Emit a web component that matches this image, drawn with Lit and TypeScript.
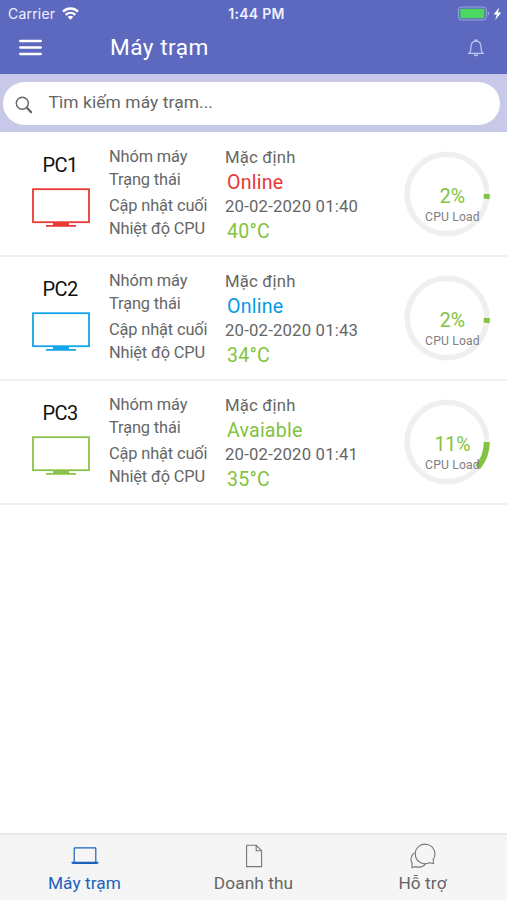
import { LitElement, html, css, svg } from "lit";
import { customElement, property } from "lit/decorators.js";

interface Station {
  name: string;
  color: string;
  status: string;
  statusColor: string;
  updated: string;
  temp: string;
  load: number;
}

const GREEN = "#82c341";

const STATIONS: Station[] = [
  { name: "PC1", color: "#e93a36", status: "Online", statusColor: "#e53935", updated: "20-02-2020 01:40", temp: "40°C", load: 2 },
  { name: "PC2", color: "#14a4ea", status: "Online", statusColor: "#039be5", updated: "20-02-2020 01:43", temp: "34°C", load: 2 },
  { name: "PC3", color: "#8bc34a", status: "Avaiable", statusColor: GREEN, updated: "20-02-2020 01:41", temp: "35°C", load: 11 },
];

@customElement("load-ring")
class LoadRing extends LitElement {
  @property({ type: Number }) value = 0;

  static styles = css`
    :host { display: grid; width: 86px; height: 86px; }
    svg, .caption { grid-area: 1 / 1; }
    svg { display: block; }
    .track { fill: none; stroke: #efefef; stroke-width: 5.6; }
    .bar { fill: none; stroke: #82c341; stroke-width: 6; }
    .caption { padding: 33px 0 0 12px; text-align: center; white-space: nowrap; }
    .percent { color: #82c341; font-size: 19.5px; line-height: 25px; letter-spacing: 0; }
    .label { color: #808080; font-size: 12.2px; line-height: 17px; letter-spacing: 0.15px; }
  `;

  render() {
    const r = 39.8;
    const length = 2 * Math.PI * r;
    const part = (length * this.value) / 100;
    return html`
      <svg width="86" height="86" viewBox="0 0 86 86">
        <circle class="track" cx="43" cy="43" r=${r} />
        ${svg`<circle class="bar" cx="43" cy="43" r=${r} stroke-dasharray="${part} ${length - part}" />`}
      </svg>
      <div class="caption">
        <div class="percent">${this.value}%</div>
        <div class="label">CPU Load</div>
      </div>
    `;
  }
}

@customElement("station-row")
class StationRow extends LitElement {
  @property({ attribute: false }) station!: Station;

  static styles = css`
    :host {
      box-sizing: border-box;
      height: 124px;
      display: grid;
      grid-template-columns: 109px 116px 178.5px 1fr;
      border-bottom: 2px solid #efefef;
      color: #666;
      font-size: 16.4px;
      white-space: nowrap;
    }
    .machine { display: flex; flex-direction: column; align-items: center; padding: 19px 0 0 13px; height: 90px; }
    .name { color: #111; font-size: 20px; line-height: 26px; letter-spacing: -0.6px; margin-right: 2px; }
    .machine svg { display: block; margin-top: 10px; }
    .labels { padding-top: 11.5px; line-height: 23.2px; letter-spacing: -0.14px; }
    .pair + .pair { padding-top: 2.8px; }
    .values { padding-top: 13px; line-height: 24.6px; font-size: 16.7px; letter-spacing: 0.2px; }
    .big { font-size: 19.6px; padding-left: 2px; }
    .temp { color: #82c341; }
    load-ring { margin-top: 18.3px; }
  `;

  render() {
    const s = this.station;
    return html`
      <div class="machine">
        <div class="name">${s.name}</div>
        <svg width="58" height="40" viewBox="0 0 58 40">
          <rect x="1" y="1.2" width="56" height="33" fill="none" stroke=${s.color} stroke-width="1.8" />
          <path d="M21 35H37V37H44V38.8H14V37H21Z" fill=${s.color} />
        </svg>
      </div>
      <div class="labels">
        <div class="pair"><div>Nhóm máy</div><div>Trạng thái</div></div>
        <div class="pair"><div>Cập nhật cuối</div><div>Nhiệt độ CPU</div></div>
      </div>
      <div class="values">
        <div>Mặc định</div>
        <div class="big" style="color:${s.statusColor}">${s.status}</div>
        <div>${s.updated}</div>
        <div class="big temp">${s.temp}</div>
      </div>
      <load-ring .value=${s.load}></load-ring>
    `;
  }
}

@customElement("app-root")
class AppRoot extends LitElement {
  static styles = css`
    :host {
      display: flex;
      flex-direction: column;
      width: 507px;
      height: 900px;
      overflow: hidden;
      background: #fff;
      font-family: Roboto, "Noto Sans", sans-serif;
    }
    svg { display: block; }
    header { height: 74px; background: #5c69bf; color: #fff; }
    .status {
      display: grid;
      grid-template-columns: 1fr auto 1fr;
      align-items: center;
      height: 27px;
      padding: 0 5px 0 8px;
      font: 14px/27px Inter, sans-serif;
      color: #eef0ff;
    }
    .carrier { display: flex; align-items: center; gap: 7px; letter-spacing: 0.2px; }
    .clock { font-size: 14px; font-weight: 600; letter-spacing: 0.3px; margin-left: 3px; }
    .power { display: flex; align-items: center; justify-content: flex-end; }
    .bar { display: flex; align-items: center; height: 41px; padding: 0 22px 0 19px; }
    .title { flex: 1; margin-left: 68px; font-size: 22.6px; letter-spacing: 0.5px; }
    .search { height: 58px; box-sizing: border-box; background: #c8c9e9; padding: 8px 7px 7px 3px; }
    .field {
      display: flex; height: 43px; border-radius: 22px; background: #fff; color: #666;
      font-size: 17.4px; line-height: 40px; letter-spacing: 0.08px; padding-left: 12px; gap: 15.5px;
    }
    .field svg { margin-top: 14px; }
    main { flex: 1; padding-top: 1px; }
    nav {
      display: grid; grid-template-columns: repeat(3, 1fr);
      box-sizing: border-box; height: 67px; border-top: 2px solid #e9e9e9;
      background: #f5f5f5; color: #666;
      font-size: 17.3px; letter-spacing: 0.08px;
    }
    .tab { display: flex; flex-direction: column; align-items: center; padding-top: 8px; }
    .tab div { line-height: 26px; margin-top: 1px; }
    .active { color: #1b62bd; }
  `;

  render() {
    return html`
      <header>
        <div class="status">
          <div class="carrier">
            <span>Carrier</span>
            <svg width="17" height="13" viewBox="0 0 17 13" fill="none" stroke="#fff" stroke-width="2.4">
              <path d="M1 4.6C5.3.4 11.7.4 16 4.6" /><path d="M3.7 7.8C6.5 5.2 10.5 5.2 13.3 7.8" />
              <path d="M5.7 9.9C7.4 8.3 9.6 8.3 11.3 9.9L8.5 12.7Z" fill="#fff" stroke="none" />
            </svg>
          </div>
          <div class="clock">1:44 PM</div>
          <div class="power">
            <svg width="45" height="15" viewBox="0 0 45 15">
              <rect x="1.4" y="1" width="28" height="13" rx="3.2" fill="none" stroke="#a0a7dc" />
              <rect x="3.2" y="2.8" width="24.2" height="9.4" rx="1" fill="#4cd662" />
              <path d="M30.8 5.2C32.6 6 32.6 9 30.8 9.8Z" fill="#a0a7dc" />
              <path d="M42.3 1.5L36.5 8.4H39.8L38.3 14L44.3 6.5H40.9Z" fill="#fff" />
            </svg>
          </div>
        </div>
        <div class="bar">
          <svg width="23" height="17" viewBox="0 0 23 17" stroke="#fff" stroke-width="2.3" stroke-linecap="round">
            <path d="M1.2 2H21.8M1.2 8.5H21.8M1.2 15H21.8" />
          </svg>
          <div class="title">Máy trạm</div>
          <svg width="18" height="20" viewBox="0 0 18 20" fill="none" stroke="#c4c9f0" stroke-width="1.2">
            <path d="M2 15.3C3.6 13.6 4 12.5 4 9.5C4 5.6 5.6 3.1 9 3.1C12.4 3.1 14 5.6 14 9.5C14 12.5 14.4 13.6 16 15.3Z" />
            <path d="M8 3V2.2H10V3M7.3 15.5C7.4 18.3 10.6 18.3 10.7 15.5" />
          </svg>
        </div>
      </header>
      <div class="search">
        <div class="field">
          <svg width="18" height="18" viewBox="0 0 18 18" fill="none" stroke="#666">
            <circle cx="7.3" cy="7.3" r="6" stroke-width="1.4" />
            <path d="M11.8 11.8L16.1 16.1" stroke-width="2.2" stroke-linecap="round" />
          </svg>
          <span>Tìm kiếm máy trạm...</span>
        </div>
      </div>
      <main>${STATIONS.map((s) => html`<station-row .station=${s}></station-row>`)}</main>
      <nav>
        <div class="tab active">
          <svg width="28" height="26" viewBox="0 0 28 26" fill="none" stroke="currentColor" stroke-width="1.2">
            <path d="M3.2 19V5.6Q3.2 4.8 4 4.8H24Q24.8 4.8 24.8 5.6V19" />
            <path d="M.5 18.8H27.5V20Q27 21 25.5 21H2.5Q1 21 .5 20Z" fill="currentColor" stroke="none" />
          </svg>
          <div>Máy trạm</div>
        </div>
        <div class="tab">
          <svg width="18" height="26" viewBox="0 0 18 26" fill="none" stroke="#777" stroke-width="1.1">
            <path d="M1.6 2.3H11.2L16.6 7.7V23.6H1.6ZM11.2 2.3V7.7H16.6" />
          </svg>
          <div>Doanh thu</div>
        </div>
        <div class="tab">
          <svg width="28" height="26" viewBox="0 0 28 26" fill="none" stroke="#777" stroke-width="1.1">
            <path d="M24.6 20.6L24.1 16.6A9.8 9.8 0 1 0 20.3 19.8Z" />
            <path d="M5.6 9.6C1.6 12.6 1 17.4 3.2 20.4L2.9 24.6L7 23.6C10.6 24.7 14.4 23.8 16.6 20.9" />
          </svg>
          <div>Hỗ trợ</div>
        </div>
      </nav>
    `;
  }
}
